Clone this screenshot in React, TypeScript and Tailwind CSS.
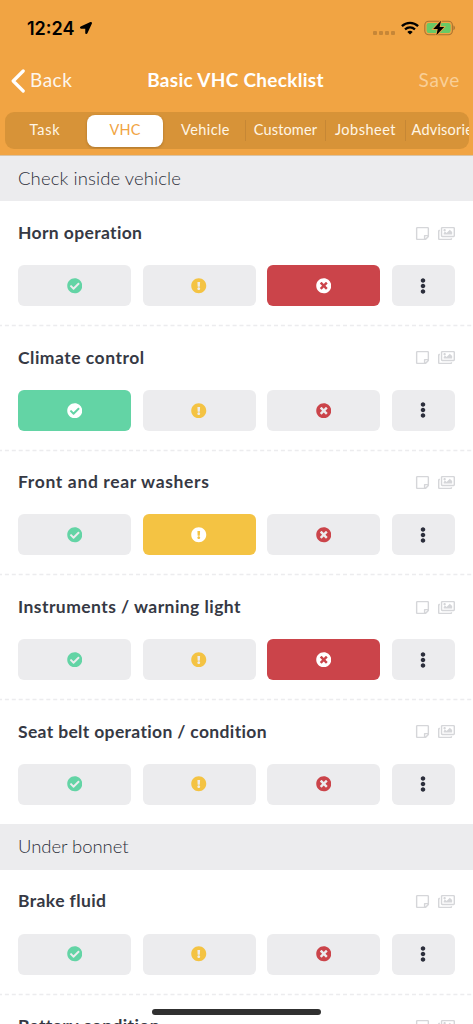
import {
  FaCheckCircle,
  FaEllipsisV,
  FaExclamationCircle,
  FaLocationArrow,
  FaRegImages,
  FaRegStickyNote,
  FaTimesCircle,
} from "react-icons/fa";

type Status = "pass" | "advise" | "fail" | null;

interface CheckItem {
  title: string;
  status: Status;
  tracking: string;
}

interface Section {
  name: string;
  tracking: string;
  items: CheckItem[];
}

const tabs = [
  { label: "Task", tracking: "tracking-[0.8px]" },
  { label: "VHC", tracking: "tracking-[0.2px]" },
  { label: "Vehicle", tracking: "tracking-[0.4px] pl-[1px]" },
  { label: "Customer", tracking: "tracking-[0.15px] pl-[1px]" },
  { label: "Jobsheet", tracking: "tracking-[0.5px] pl-[1px]" },
  { label: "Advisories", tracking: "tracking-[0.2px] pl-[1px]" },
];

const sections: Section[] = [
  {
    name: "Check inside vehicle",
    tracking: "tracking-[0.1px]",
    items: [
      { title: "Horn operation", status: "fail", tracking: "tracking-[0.36px]" },
      { title: "Climate control", status: "pass", tracking: "tracking-[0.5px]" },
      { title: "Front and rear washers", status: "advise", tracking: "tracking-[0.64px]" },
      { title: "Instruments / warning light", status: "fail", tracking: "tracking-[0.44px]" },
      { title: "Seat belt operation / condition", status: null, tracking: "tracking-[0.34px]" },
    ],
  },
  {
    name: "Under bonnet",
    tracking: "tracking-[-0.05px]",
    items: [
      { title: "Brake fluid", status: null, tracking: "tracking-[0.4px]" },
      { title: "Battery condition", status: null, tracking: "tracking-[0.38px]" },
    ],
  },
];

// --- Status Bar ---
const StatusBar = () => (
  <div className="flex h-[56px] items-center justify-between pl-[27px] pr-[17px]">
    <div className="flex items-center gap-[5px] text-black">
      <span className="pt-px font-['Inter',sans-serif] text-[18px] font-semibold leading-none">
        12:24
      </span>
      <FaLocationArrow size={12} />
    </div>
    <div className="flex items-center">
      <div className="mr-[6px] mt-[9px] flex gap-[2px]">
        {[0, 1, 2, 3].map((i) => (
          <span key={i} className="h-[4px] w-[4px] rounded-[1px] bg-[#c68637]" />
        ))}
      </div>
      <svg className="mr-[5px]" width="18" height="14" viewBox="0 0 18 14">
        <g fill="none" stroke="#000" strokeWidth="2.3">
          <path d="M0.9 5.1C5.5 0.7 12.5 0.7 17.1 5.1" />
          <path d="M4 8.4C7 5.8 11 5.8 14 8.4" />
        </g>
        <path d="M9 13.6L6.3 10.9C7.9 9.5 10.1 9.5 11.7 10.9Z" />
      </svg>
      <svg width="32" height="16" viewBox="0 0 32 16">
        <rect x="0.8" y="1.3" width="27.6" height="13.4" rx="4" fill="none" stroke="#aa7330" strokeWidth="1.1" />
        <rect x="2.6" y="3" width="24" height="10" rx="2.2" fill="#68ca66" />
        <path d="M29.5 5.6C31.2 6.3 31.2 9.5 29.5 10.2Z" fill="#9b6a2e" />
        <path
          d="M17 0.7L9.2 9H13.7L12.4 15.3L20.2 7H15.6Z"
          fill="#000"
          stroke="#f1a443"
          strokeWidth="1.6"
          paintOrder="stroke"
        />
      </svg>
    </div>
  </div>
);

// --- Navigation Bar ---
const NavBar = () => (
  <div className="grid h-[49px] grid-cols-[1fr_auto_1fr] items-center pl-[11px] pr-[13px]">
    <button className="flex items-center gap-[5px] text-white">
      <svg width="14" height="24" viewBox="0 0 14 24">
        <path d="M12.2 2L2.2 12L12.2 22" fill="none" stroke="#fff" strokeWidth="3.2" strokeLinecap="round" strokeLinejoin="round" />
      </svg>
      <span className="text-[19px] font-normal tracking-[0.5px] opacity-90">Back</span>
    </button>
    <h1 className="text-[19px] font-bold tracking-[0.3px] text-white">Basic VHC Checklist</h1>
    <button className="text-right text-[19px] tracking-[0.6px] text-[#f9cf97]">Save</button>
  </div>
);

// --- Segmented Tabs ---
const Tabs = () => (
  <div className="ml-[5px] mt-[7px] flex h-[37px] w-[464px] overflow-hidden rounded-[9px] bg-[#d79338]">
    {tabs.map((tab, i) => (
      <button
        key={tab.label}
        className="relative flex w-[80px] shrink-0 items-center justify-center text-[14.5px] text-[#fff6e6]"
      >
        {i > 2 && <span className="absolute left-0 top-[8px] h-[21px] w-px bg-[#c68735]" />}
        {tab.label === "VHC" ? (
          <span
            className={`${tab.tracking} flex h-[32px] w-[76px] items-center justify-center rounded-[8px] bg-white pb-px text-[#f1a443] shadow-[0_1px_3px_rgba(0,0,0,0.2)]`}
          >
            {tab.label}
          </span>
        ) : (
          <span className={`${tab.tracking} pb-px`}>{tab.label}</span>
        )}
      </button>
    ))}
  </div>
);

// --- Checklist Row ---
const CheckRow = ({ item, last }: { item: CheckItem; last: boolean }) => (
  <div className="h-[124.6px] shrink-0">
    <div className="flex h-[64px] items-center justify-between px-[18px]">
      <h3 className={`${item.tracking} text-[17.5px] font-bold text-[#363944]`}>
        {item.title}
      </h3>
      <div className="flex items-center gap-[8.5px] text-[#d5d6d9]">
        <FaRegStickyNote size={15} />
        <FaRegImages size={17} />
      </div>
    </div>
    <div className="grid h-[41px] grid-cols-[113px_113px_113px_63.5px] gap-[11.5px] px-[18px]">
      <button
        className={`flex items-center justify-center rounded-[6px] ${
          item.status === "pass" ? "bg-[#63d4a5] text-white" : "bg-[#ececee] text-[#63d4a5]"
        }`}
      >
        <FaCheckCircle size={15.5} />
      </button>
      <button
        className={`flex items-center justify-center rounded-[6px] ${
          item.status === "advise" ? "bg-[#f4c343] text-white" : "bg-[#ececee] text-[#f4c343]"
        }`}
      >
        <FaExclamationCircle size={15.5} />
      </button>
      <button
        className={`flex items-center justify-center rounded-[6px] ${
          item.status === "fail" ? "bg-[#cb444a] text-white" : "bg-[#ececee] text-[#cb444a]"
        }`}
      >
        <FaTimesCircle size={15.5} />
      </button>
      <button className="flex items-center justify-center rounded-[6px] bg-[#ececee] text-[#2c2f3c]">
        <FaEllipsisV size={16} />
      </button>
    </div>
    {!last && (
      <svg className="mt-[18px] block" width="473" height="3">
        <path d="M-2 1.5H473" stroke="#ececee" strokeWidth="1.3" strokeDasharray="4 2.9" />
      </svg>
    )}
  </div>
);

export default function App() {
  return (
    <div className="relative flex h-[1024px] w-[473px] flex-col overflow-hidden bg-white font-['Lato',sans-serif]">
      <header className="h-[156px] shrink-0 border-b border-[#d9c3a5] bg-[#f1a443]">
        <StatusBar />
        <NavBar />
        <Tabs />
      </header>
      {sections.map((section) => (
        <section key={section.name} className="shrink-0">
          <h2
            className={`${section.tracking} flex h-[45.3px] items-center bg-[#ececee] pl-[18px] text-[18.5px] font-light text-[#2c2f3a]`}
          >
            {section.name}
          </h2>
          {section.items.map((item, i) => (
            <CheckRow key={item.title} item={item} last={i === section.items.length - 1} />
          ))}
        </section>
      ))}
      <div className="absolute left-[152px] top-[1009px] h-[6px] w-[169px] rounded-full bg-[#303030]" />
    </div>
  );
}
